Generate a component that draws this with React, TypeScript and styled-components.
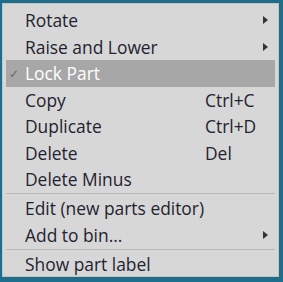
import React from "react";
import styled, { createGlobalStyle } from "styled-components";

const Global = createGlobalStyle`
  html, body {
    margin: 0;
    padding: 0;
    width: 283px;
    height: 282px;
    overflow: hidden;
    background: #1e6d8a;
  }
`;

const Page = styled.div`
  width: 283px;
  height: 282px;
  padding: 3px 4px 0 2px;
  box-sizing: border-box;
`;

const Menu = styled.div`
  width: 277px;
  height: 274px;
  box-sizing: border-box;
  background: #d7d7d7;
  border: 1px solid #c4c4c4;
  padding: 3px 3px 0 3px;
  display: flex;
  flex-direction: column;
  font-family: "Open Sans", "Noto Sans", sans-serif;
  font-size: 17.4px;
  color: #1f2330;
`;

const Row = styled.div<{ active?: boolean }>`
  height: 26.5px;
  flex: none;
  display: grid;
  grid-template-columns: 19px 180px 1fr 12px;
  align-items: center;
  background: ${(p) => (p.active ? "#a7a7a7" : "transparent")};
  color: ${(p) => (p.active ? "#ffffff" : "inherit")};
`;

const Check = styled.span`
  color: #6b6b6b;
  font-size: 12px;
  padding-left: 3px;
`;

const Label = styled.span`
  white-space: nowrap;
`;

const Shortcut = styled.span`
  white-space: nowrap;
`;

const Arrow = styled.span`
  width: 0;
  height: 0;
  border-top: 4.5px solid transparent;
  border-bottom: 4.5px solid transparent;
  border-left: 5px solid #333;
`;

const Separator = styled.div`
  height: 2.5px;
  flex: none;
  display: flex;
  align-items: center;
  &::after {
    content: "";
    flex: 1;
    height: 1px;
    background: #b9b9b9;
  }
`;

type Item =
  | { sep: true }
  | { label: string; shortcut?: string; sub?: boolean; checked?: boolean; active?: boolean };

const items: Item[] = [
  { label: "Rotate", sub: true },
  { label: "Raise and Lower", sub: true },
  { label: "Lock Part", checked: true, active: true },
  { label: "Copy", shortcut: "Ctrl+C" },
  { label: "Duplicate", shortcut: "Ctrl+D" },
  { label: "Delete", shortcut: "Del" },
  { label: "Delete Minus" },
  { sep: true },
  { label: "Edit (new parts editor)" },
  { label: "Add to bin...", sub: true },
  { sep: true },
  { label: "Show part label" },
];

export default function App() {
  return (
    <>
      <Global />
      <Page>
        <Menu>
          {items.map((it, i) =>
            "sep" in it ? (
              <Separator key={i} />
            ) : (
              <Row key={i} active={it.active}>
                <Check>{it.checked ? "✓" : ""}</Check>
                <Label>{it.label}</Label>
                <Shortcut>{it.shortcut}</Shortcut>
                {it.sub ? <Arrow /> : <span />}
              </Row>
            )
          )}
        </Menu>
      </Page>
    </>
  );
}
